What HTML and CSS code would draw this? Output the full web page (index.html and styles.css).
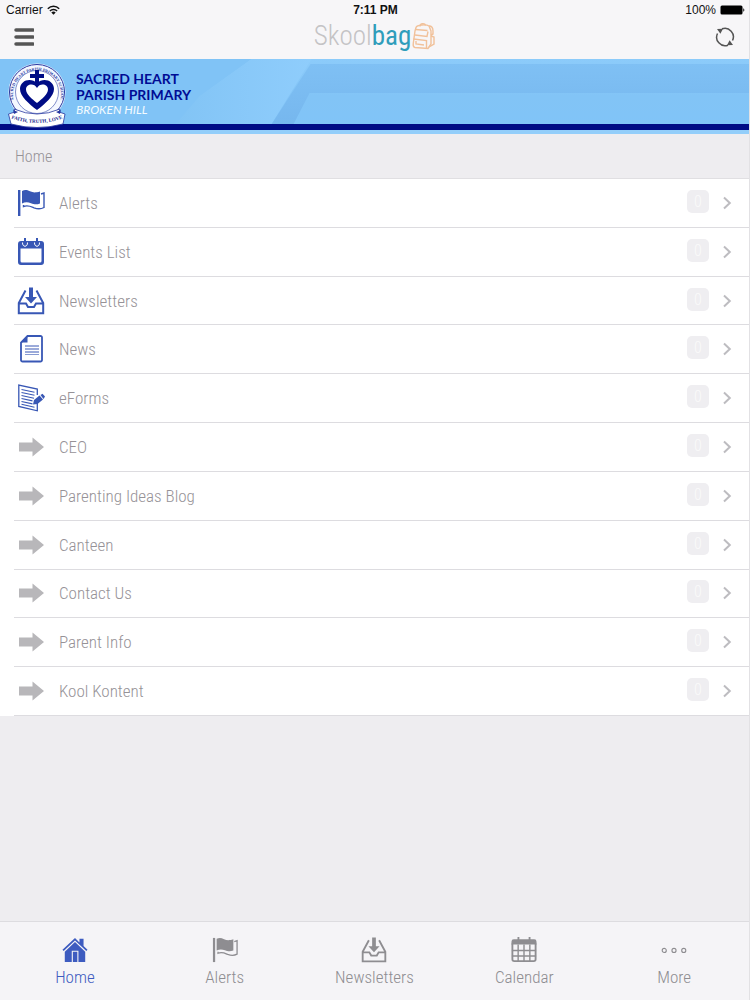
FILE: index.html
```html
<!DOCTYPE html>
<html lang="en">
<head>
<meta charset="utf-8">
<meta name="viewport" content="width=device-width, initial-scale=1">
<title>Skoolbag</title>
<link rel="stylesheet" href="styles.css">
</head>
<body>
<svg class="sprite" aria-hidden="true">
  <symbol id="flag" viewBox="0 0 28 28">
    <path d="M1 1h2.400v26H1z"/>
    <path d="M5 2c3-1.500 5-1 8 .3s5 1.600 10 .2v12c-4 1.500-6 .8-9-.3s-6-1.300-9 .3z"/>
    <path d="M24 5l3-1v14.500c-3 1.600-7 1.400-10 .3-3.500-1.500-6-3-10.500-1.300v-1.500" fill="none" stroke="currentColor" stroke-width="1.400"/>
  </symbol>
  <symbol id="events" viewBox="0 0 28 28">
    <path fill-rule="evenodd" d="M4 3h20a3 3 0 0 1 3 3v18a3 3 0 0 1-3 3H4a3 3 0 0 1-3-3V6a3 3 0 0 1 3-3zM3.500 10.500V23A1.500 1.500 0 0 0 5 24.500h18a1.500 1.500 0 0 0 1.500-1.500V10.500z"/>
    <path d="M7 0h2v6H7zM19 0h2v6h-2z"/>
    <path d="M5.500 4.500c-.3 5 5.300 5 5 0M17.500 4.500c-.3 5 5.300 5 5 0" fill="none" stroke="#fff" stroke-width="1"/>
  </symbol>
  <symbol id="inbox" viewBox="0 0 28 28">
    <path d="M12 .5h4V10h4l-6 6.500L8 10h4z"/>
    <path d="M8.500 3.500L1.800 16v10.200h24.400V16L19.500 3.500M2 16.500h7l2 3.500h6l2-3.500h7" fill="none" stroke="currentColor" stroke-width="2"/>
  </symbol>
  <symbol id="news" viewBox="0 0 28 28">
    <path d="M10.500 1h13A1.500 1.500 0 0 1 25 2.500v22.500a1.500 1.500 0 0 1-1.500 1.500h-18A1.500 1.500 0 0 1 4 25V7.500z" fill="none" stroke="currentColor" stroke-width="1.800"/>
    <path d="M10.500 1v6.500H4z"/>
    <path d="M8 11h14M8 14h14M8 17h14" fill="none" stroke="currentColor" stroke-width="1"/>
    <path d="M8 19.500h14" fill="none" stroke="currentColor" stroke-width=".6"/>
  </symbol>
  <symbol id="form" viewBox="0 0 28 28">
    <path d="M20.300 11V5L1.800 1v21.500l18.500 4.300V19" fill="none" stroke="currentColor" stroke-width="1.300"/>
    <path d="M4.500 5.500l13 2.800M4.500 8.500l13 2.800M4.500 11.500l12.500 2.800M4.500 14.500l11 2.400M4.500 17.500l11 2.400M4.500 20.300l13 2.900" fill="none" stroke="currentColor" stroke-width="1.100"/>
    <path d="M17 16l5.500-4.500 3.500 4-5.500 4.500-4.500.5z"/>
    <path d="M23.500 11l2-1.200 2.500 2.700-1.500 2.500z"/>
  </symbol>
  <symbol id="arrow" viewBox="0 0 28 28">
    <path d="M2 9.500H15.500V4.500L27 14 15.500 23.500V18.500H2z"/>
  </symbol>
  <symbol id="house" viewBox="0 0 28 28">
    <path d="M14 1L.5 13.800l1.300 1.300L14 3.700l12.200 11.400 1.300-1.300-4.300-4V2h-4.400v4z"/>
    <path fill-rule="evenodd" d="M14 5.500l11 10.300V27H3V15.800zM10.500 27h1.200V16h4.800v11h1.200V14.800h-7.200z"/>
  </symbol>
  <symbol id="calendar" viewBox="0 0 28 28">
    <path d="M3 2.500h22a2.500 2.500 0 0 1 2.500 2.500v3H.5V5A2.500 2.500 0 0 1 3 2.500zM7 0h2v4H7zM19 0h2v4h-2z"/>
    <path d="M1.500 7v17a2 2 0 0 0 2 2h21a2 2 0 0 0 2-2V7" fill="none" stroke="currentColor" stroke-width="2"/>
    <path d="M1 14.500h26M1 20.500h26M7.700 8v18M14 8v18M20.300 8v18" fill="none" stroke="currentColor" stroke-width="1.500"/>
  </symbol>
  <symbol id="dots" viewBox="0 0 28 28">
    <g fill="none" stroke="currentColor" stroke-width="1.200"><circle cx="3.500" cy="14.500" r="2.200"/><circle cx="14" cy="14.500" r="2.200"/><circle cx="24.500" cy="14.500" r="2.200"/></g>
  </symbol>
  <symbol id="chevron" viewBox="0 0 10 14">
    <path d="M2 1.500L7.800 7 2 12.500" fill="none" stroke="currentColor" stroke-width="2"/>
  </symbol>
</svg>

<div class="app">
  <header class="top">
    <div class="status">
      <span class="carrier">Carrier
        <svg width="13" height="10" viewBox="0 0 13 10" aria-hidden="true"><g fill="none" stroke="#111" stroke-width="1.500"><path d="M.8 3.700a8 8 0 0 1 11.400 0"/><path d="M2.900 6a5 5 0 0 1 7.200 0"/></g><path d="M6.500 9.800L4.300 7.500a3.100 3.100 0 0 1 4.400 0z" fill="#111"/></svg>
      </span>
      <span class="clock">7:11 PM</span>
      <span class="power">100%
        <svg width="25" height="10" viewBox="0 0 25 10" aria-hidden="true"><rect x=".5" y=".5" width="22" height="9" rx="1.500"/><path d="M23.300 3.300c1.400.4 1.400 3 0 3.400z"/></svg>
      </span>
    </div>
    <div class="bar">
      <button class="tool" type="button" aria-label="Menu">
        <svg width="20" height="20" viewBox="0 0 20 20"><path d="M2 3h17M2 10h17M2 17h17" stroke="#555" stroke-width="3.500" stroke-linecap="round"/></svg>
      </button>
      <div class="brand"><span>Skool<b>bag</b></span>
        <svg width="23" height="27" viewBox="0 0 23 27" fill="none" stroke="#f1c19a" stroke-width="1.400" aria-hidden="true"><path d="M4 4.500C5 2 14 1 17 3l2 5v13l-3 4.500-13-1C1 24 1 23 1.200 21L3 8z"/><path d="M8 3.500C8 0 13 0 13.500 2.500M3.500 6.500l12 1M3 12l12 1.500 1-5M1.500 16l13 1.500v7.500M4 18v3l8 1M17 3c3 0 4 2 4 5v3l-2 1M19 13l3 1v7l-5 3"/></svg>
      </div>
      <button class="tool" type="button" aria-label="Refresh">
        <svg width="20" height="20" viewBox="0 0 20 20"><g fill="none" stroke="#555" stroke-width="1.500"><path d="M7 1.800A8.500 8.500 0 0 1 17.500 13.500M13 18.200A8.500 8.500 0 0 1 2.500 6.500"/></g><path d="M2 2l6-.2-2.600 5zM18 18l-6 .2 2.600-5z" fill="#555"/></svg>
      </button>
    </div>
  </header>

  <section class="banner">
    <svg class="banner-art" viewBox="0 0 750 75" preserveAspectRatio="none" aria-hidden="true">
      <defs>
        <linearGradient id="sky" x1="0" x2="0" y1="0" y2="1"><stop offset="0" stop-color="#8ccbfa"/><stop offset=".5" stop-color="#82c4f6"/><stop offset="1" stop-color="#80c4f8"/></linearGradient>
        <linearGradient id="glow" x1="0" x2="1" y1="0" y2="0"><stop offset="0" stop-color="#82c4f5"/><stop offset="1" stop-color="#8fcdfc"/></linearGradient>
        <linearGradient id="ribbon" x1="0" x2="0" y1="0" y2="1"><stop offset="0" stop-color="#7fc0f4"/><stop offset="1" stop-color="#76b7ee"/></linearGradient>
      </defs>
      <path fill="url(#sky)" d="M0 0h750v75H0z"/>
      <path fill="#80c3f6" d="M0 0h252l-52 37-24 28H0z"/>
      <path fill="url(#glow)" d="M252 0h60L272 65h-96l24-28z"/>
      <path fill="url(#ribbon)" d="M311 5h439v29H310l-16 31h-22z"/>
      <path fill="#000c85" d="M0 65h750v6H0z"/>
      <path fill="#93cefa" d="M0 71h750v4H0z"/>
    </svg>
    <svg class="crest" width="60" height="66" viewBox="0 0 60 66" role="img" aria-label="Sacred Heart Parish Primary School crest">
      <defs><path id="ring" d="M9 44A24 24 0 1 1 51 44"/><path id="motto" d="M3 56q27 10 54 0"/></defs>
      <circle cx="30" cy="30" r="28.500" fill="#f4f7ff"/>
      <circle cx="30" cy="30" r="27.500" fill="none" stroke="#2737a0" stroke-width="1"/>
      <circle cx="30" cy="30" r="21.500" fill="#fff" stroke="#6574bd" stroke-width=".8"/>
      <text class="crest-ring"><textPath href="#ring" startOffset="50%" text-anchor="middle">SACRED HEART PARISH PRIMARY SCHOOL</textPath></text>
      <path fill="#000c85" d="M28 8h4v4h5v4h-5v6h-4v-6h-5v-4h5z"/>
      <path fill="#000c85" d="M30 48C22 42 13 34 13 27c0-9 11-12 17-6 6-6 17-3 17 6 0 7-9 15-17 21z"/>
      <path fill="#fff" d="M30 41c-5-4-11-9-11-13.500 0-5.500 8-7 11-1.500 3-5.500 11-4 11 1.500C41 32 35 37 30 41z"/>
      <path fill="#fff" stroke="#2737a0" stroke-width=".8" d="M7 47q23 10 46 0l-1 3 6 2-2 10q-26 7-52 0L1.500 52 8 50z"/>
      <path fill="#2737a0" d="M6 48l5 2-4 2zM54 48l-5 2 4 2z"/>
      <text class="crest-motto"><textPath href="#motto" startOffset="50%" text-anchor="middle">FAITH, TRUTH, LOVE</textPath></text>
    </svg>
    <h1 class="school">Sacred Heart<br>Parish Primary<small>Broken Hill</small></h1>
  </section>

  <h2 class="crumb">Home</h2>

  <main>
    <ul class="list">
      <li><a href="#alerts"><svg class="icon blue"><use href="#flag"/></svg><span class="name">Alerts</span><span class="badge">0</span><svg class="chev"><use href="#chevron"/></svg></a></li>
      <li><a href="#events"><svg class="icon blue"><use href="#events"/></svg><span class="name">Events List</span><span class="badge">0</span><svg class="chev"><use href="#chevron"/></svg></a></li>
      <li><a href="#newsletters"><svg class="icon blue"><use href="#inbox"/></svg><span class="name">Newsletters</span><span class="badge">0</span><svg class="chev"><use href="#chevron"/></svg></a></li>
      <li><a href="#news"><svg class="icon blue"><use href="#news"/></svg><span class="name">News</span><span class="badge">0</span><svg class="chev"><use href="#chevron"/></svg></a></li>
      <li><a href="#eforms"><svg class="icon blue"><use href="#form"/></svg><span class="name">eForms</span><span class="badge">0</span><svg class="chev"><use href="#chevron"/></svg></a></li>
      <li><a href="#ceo"><svg class="icon"><use href="#arrow"/></svg><span class="name">CEO</span><span class="badge">0</span><svg class="chev"><use href="#chevron"/></svg></a></li>
      <li><a href="#blog"><svg class="icon"><use href="#arrow"/></svg><span class="name">Parenting Ideas Blog</span><span class="badge">0</span><svg class="chev"><use href="#chevron"/></svg></a></li>
      <li><a href="#canteen"><svg class="icon"><use href="#arrow"/></svg><span class="name">Canteen</span><span class="badge">0</span><svg class="chev"><use href="#chevron"/></svg></a></li>
      <li><a href="#contact"><svg class="icon"><use href="#arrow"/></svg><span class="name">Contact Us</span><span class="badge">0</span><svg class="chev"><use href="#chevron"/></svg></a></li>
      <li><a href="#info"><svg class="icon"><use href="#arrow"/></svg><span class="name">Parent Info</span><span class="badge">0</span><svg class="chev"><use href="#chevron"/></svg></a></li>
      <li><a href="#kontent"><svg class="icon"><use href="#arrow"/></svg><span class="name">Kool Kontent</span><span class="badge">0</span><svg class="chev"><use href="#chevron"/></svg></a></li>
    </ul>
  </main>

  <nav class="tabs">
    <a class="tab active" href="#home"><svg><use href="#house"/></svg>Home</a>
    <a class="tab" href="#alerts"><svg><use href="#flag"/></svg>Alerts</a>
    <a class="tab" href="#newsletters"><svg><use href="#inbox"/></svg>Newsletters</a>
    <a class="tab" href="#calendar"><svg><use href="#calendar"/></svg>Calendar</a>
    <a class="tab" href="#more"><svg><use href="#dots"/></svg>More</a>
  </nav>
</div>
</body>
</html>
```
FILE: styles.css
```css
* { box-sizing: border-box; }
body {
  margin: 0;
  background: #eeedf0;
  color: #969297;
  font-family: "Roboto Condensed", "Liberation Sans Narrow", "Liberation Sans", sans-serif;
  font-size: 17px;
  font-weight: 300;
  line-height: 20px;
}
a { color: inherit; text-decoration: none; }
.sprite { position: absolute; width: 0; height: 0; }
.app {
  display: flex;
  flex-direction: column;
  min-height: 100vh;
  border-right: 1px solid #e2e1e4;
}

.top { background: #f7f6f8; padding-bottom: 6px; }
.status {
  display: grid;
  grid-template-columns: 1fr auto 1fr;
  align-items: center;
  height: 20px;
  padding: 0 4px 0 6px;
  color: #111;
  font: 400 12px/20px "Liberation Sans", Arial, sans-serif;
}
.clock { font-weight: 700; }
.carrier, .power { display: flex; align-items: center; gap: 4px; }
.power { justify-content: flex-end; }
.bar {
  display: flex;
  align-items: center;
  justify-content: space-between;
  height: 33px;
  padding: 0 14px;
}
.tool { display: flex; padding: 0; border: 0; background: none; }
.brand {
  display: flex;
  align-items: center;
  gap: 1px;
  color: #c4c3c5;
  font-size: 27px;
  line-height: 33px;
}
.brand b { color: #2f9dbb; font-weight: 400; }

.banner {
  position: relative;
  display: flex;
  align-items: flex-start;
  gap: 9px;
  height: 75px;
  padding: 3px 7px;
  overflow: hidden;
}
.banner-art { position: absolute; inset: 0; width: 100%; height: 100%; }
.crest, .school { position: relative; }
.crest-ring { fill: #2737a0; font: 700 4px "Liberation Serif", serif; }
.crest-motto { fill: #10208c; font: 700 5px "Liberation Serif", serif; }
.school {
  margin: 0;
  padding-top: 9px;
  color: #000c95;
  font: 700 14px/16px Lato, sans-serif;
  text-transform: uppercase;
}
.school small {
  display: block;
  color: #f4fbff;
  font: italic 400 12px/14px Lato, sans-serif;
}

.crumb {
  margin: 0;
  padding: 13px 15px 11px;
  border-bottom: 1px solid #e0dfe2;
  font-size: 16px;
  font-weight: 300;
}

.list {
  display: grid;
  grid-auto-rows: 1fr;
  min-height: 537px;
  margin: 0;
  padding: 0 0 0 14px;
  background: #fff;
  list-style: none;
}
.list li { border-bottom: 1px solid #dddce0; }
.list a {
  display: flex;
  align-items: center;
  height: 100%;
  padding: 0 17px 0 3px;
}
.icon { width: 28px; height: 28px; color: #b8b7ba; fill: currentColor; }
.icon.blue { color: #3857b5; }
.name { flex: 1; padding-left: 14px; }
.badge {
  width: 22px;
  margin: 0 13px 3px 0;
  border-radius: 5px;
  background: #efeef1;
  color: #fafafa;
  font-size: 16px;
  line-height: 23px;
  text-align: center;
}
.chev { width: 10px; height: 14px; color: #bdbcc0; }

.tabs {
  display: grid;
  grid-template-columns: repeat(5, 1fr);
  margin-top: auto;
  padding: 15px 0 13px;
  border-top: 1px solid #dddce0;
  background: #f5f4f7;
}
.tab {
  display: flex;
  flex-direction: column;
  align-items: center;
  gap: 4px;
  color: #8e8d91;
}
.tab svg { width: 26px; height: 26px; fill: currentColor; }
.tab.active { color: #3d5bc0; }
```
